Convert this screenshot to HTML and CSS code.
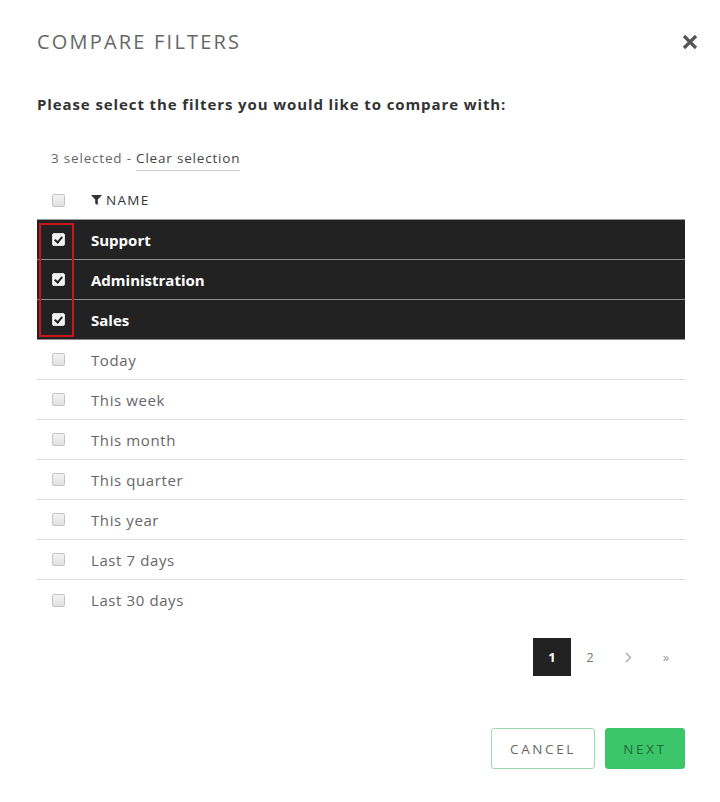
FILE: index.html
```html
<!DOCTYPE html>
<html lang="en">
<head>
    <meta charset="UTF-8">
    <meta name="viewport" content="width=device-width, initial-scale=1.0">
    <title>Compare Filters</title>
    <link rel="stylesheet" href="styles.css">
</head>
<body>
    <div class="modal">
        <div class="modal-header">
            <h1>COMPARE FILTERS</h1>
            <button class="close-button" aria-label="Close">
                <svg width="16" height="16" viewBox="0 0 16 16">
                    <path d="M2 2 L14 14 M14 2 L2 14" stroke="#555" stroke-width="3.2"/>
                </svg>
            </button>
        </div>

        <p class="intro">Please select the filters you would like to compare with:</p>

        <div class="selection-info">
            3 selected - <a class="clear-link">Clear selection</a>
        </div>

        <div class="filter-table">
            <div class="table-head">
                <span class="checkbox"></span>
                <span class="col-name">
                    <svg width="11" height="10" viewBox="0 0 11 10">
                        <path d="M0 0 H11 L6.8 4.6 V10 L4.2 8.6 V4.6 Z" fill="#333"/>
                    </svg>
                    NAME
                </span>
            </div>

            <div class="selected-group">
                <div class="checkbox-outline"></div>
                <div class="row selected"><span class="checkbox checked"></span><span class="row-label">Support</span></div>
                <div class="row selected"><span class="checkbox checked"></span><span class="row-label">Administration</span></div>
                <div class="row selected"><span class="checkbox checked"></span><span class="row-label">Sales</span></div>
            </div>

            <div class="row"><span class="checkbox"></span><span class="row-label">Today</span></div>
            <div class="row"><span class="checkbox"></span><span class="row-label">This week</span></div>
            <div class="row"><span class="checkbox"></span><span class="row-label">This month</span></div>
            <div class="row"><span class="checkbox"></span><span class="row-label">This quarter</span></div>
            <div class="row"><span class="checkbox"></span><span class="row-label">This year</span></div>
            <div class="row"><span class="checkbox"></span><span class="row-label">Last 7 days</span></div>
            <div class="row"><span class="checkbox"></span><span class="row-label">Last 30 days</span></div>
        </div>

        <div class="pagination">
            <span class="page active">1</span>
            <span class="page">2</span>
            <span class="page">
                <svg width="7" height="11" viewBox="0 0 7 11">
                    <path d="M1 1 L5.5 5.5 L1 10" fill="none" stroke="#aaa" stroke-width="1.4"/>
                </svg>
            </span>
            <span class="page arrow">&raquo;</span>
        </div>

        <div class="actions">
            <button class="btn btn-cancel">CANCEL</button>
            <button class="btn btn-next">NEXT</button>
        </div>
    </div>
</body>
</html>
```

FILE: styles.css
```css
* {
    margin: 0;
    padding: 0;
    box-sizing: border-box;
}

body {
    font-family: 'Open Sans', 'Lato', sans-serif;
    background: #fff;
    color: #444;
}

.modal {
    width: 720px;
    padding: 29px 35px 0 37px;
}

.modal-header {
    display: flex;
    justify-content: space-between;
    align-items: center;
    height: 24px;
}

.modal-header h1 {
    font-size: 20px;
    font-weight: 400;
    letter-spacing: 2.2px;
    color: #666;
}

.close-button {
    background: none;
    border: none;
    width: 16px;
    height: 16px;
    margin-right: -13px;
    margin-top: 2px;
    cursor: pointer;
}

.intro {
    margin-top: 41px;
    font-size: 15px;
    font-weight: 700;
    letter-spacing: 0.9px;
    color: #333;
}

.selection-info {
    margin-top: 35px;
    padding-left: 14px;
    font-size: 13.5px;
    letter-spacing: 0.8px;
    color: #666;
    height: 22px;
}

.clear-link {
    color: #444;
    padding-bottom: 3px;
    border-bottom: 1px solid #ccc;
}

.filter-table {
    margin-top: 10px;
}

.table-head {
    display: flex;
    align-items: center;
    height: 38px;
    padding-left: 15px;
}

.col-name {
    display: flex;
    align-items: center;
    gap: 4px;
    margin-left: 26px;
    font-size: 13.5px;
    letter-spacing: 1.3px;
    color: #333;
}

.checkbox {
    width: 13px;
    height: 13px;
    border: 1px solid #c4c4c4;
    border-radius: 2px;
    background: linear-gradient(#f4f4f4, #e0e0e0);
    flex-shrink: 0;
    position: relative;
}

.checkbox.checked {
    background: #f2f2f2;
    border-color: #ddd;
}

.checkbox.checked::after {
    content: '';
    position: absolute;
    left: 3px;
    top: 1px;
    width: 3px;
    height: 6px;
    border: solid #222;
    border-width: 0 2px 2px 0;
    transform: rotate(40deg);
}

.row {
    display: flex;
    align-items: center;
    height: 40px;
    padding-left: 15px;
    border-bottom: 1px solid #ddd;
    font-size: 15px;
    letter-spacing: 0.6px;
    color: #666;
}

.row:last-child {
    border-bottom: none;
}

.row-label {
    margin-left: 26px;
}

.selected-group {
    position: relative;
    border-top: 1px solid #999;
}

.row.selected {
    background: #222;
    color: #fff;
    font-weight: 700;
    letter-spacing: 0;
    border-bottom: 1px solid #8a8a8a;
}

.checkbox-outline {
    position: absolute;
    left: 2px;
    top: 3px;
    width: 35px;
    height: 114px;
    border: 2px solid #c8161d;
    pointer-events: none;
}

.pagination {
    display: flex;
    justify-content: flex-end;
    align-items: center;
    margin-top: 18px;
}

.page {
    width: 38px;
    height: 38px;
    display: flex;
    align-items: center;
    justify-content: center;
    font-size: 13px;
    color: #777;
}

.page.active {
    background: #222;
    color: #fff;
    font-weight: 700;
}

.page.arrow {
    font-size: 13px;
    color: #999;
}

.actions {
    display: flex;
    justify-content: flex-end;
    gap: 10px;
    margin-top: 52px;
}

.btn {
    height: 41px;
    border-radius: 3px;
    font-family: inherit;
    font-size: 13.5px;
    letter-spacing: 2.6px;
    cursor: pointer;
}

.btn-cancel {
    width: 104px;
    background: #fff;
    border: 1px solid #9fd9b2;
    color: #666;
}

.btn-next {
    width: 80px;
    background: #3dc56a;
    border: 1px solid #3dc56a;
    color: #1d6b38;
}
```
